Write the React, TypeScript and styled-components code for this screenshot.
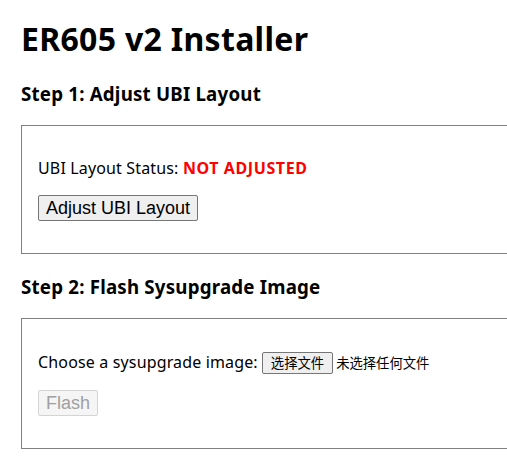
import styled, { createGlobalStyle } from 'styled-components';

const GlobalStyle = createGlobalStyle`
  html, body {
    margin: 0;
    overflow: hidden;
    background: #ffffff;
  }
  body {
    font-family: 'Noto Sans', 'Open Sans', sans-serif;
    color: #000000;
  }
`;

function App() {
  return (
    <>
      <GlobalStyle />
      <Page>
        <Title>ER605 v2 Installer</Title>

        <StepTitle>Step 1: Adjust UBI Layout</StepTitle>
        <Section>
          <Row>
            UBI Layout Status: <Status>NOT ADJUSTED</Status>
          </Row>
          <Row>
            <Button>Adjust UBI Layout</Button>
          </Row>
        </Section>

        <StepTitle>Step 2: Flash Sysupgrade Image</StepTitle>
        <Section>
          <FileRow>
            <span>Choose a sysupgrade image:</span>
            <FileButton>选择文件</FileButton>
            <FileName>未选择任何文件</FileName>
          </FileRow>
          <Row>
            <Button disabled>Flash</Button>
          </Row>
        </Section>
      </Page>
    </>
  );
}

export default App;

const Page = styled.div`
  padding: 0 21px;
  width: 640px;
`;

const Title = styled.h1`
  font-size: 32px;
  line-height: 42px;
  font-weight: 700;
  letter-spacing: 0.3px;
  margin: 18px 0 21px;
`;

const StepTitle = styled.h3`
  font-size: 18.72px;
  line-height: 25px;
  font-weight: 700;
  letter-spacing: 0.2px;
  margin: 20px 0 19px;
`;

const Section = styled.div`
  border: 1px solid #808080;
  padding: 16px;
`;

const Row = styled.p`
  font-size: 16px;
  line-height: 21px;
  letter-spacing: 0.15px;
  margin: 16px 0;
`;

const FileRow = styled(Row)`
  display: flex;
  align-items: center;
  height: 23px;
  gap: 4px;
`;

const Status = styled.span`
  color: #ff0000;
  font-weight: 700;
  letter-spacing: 0.6px;
`;

const Button = styled.button`
  font-family: 'Liberation Sans', Arial, sans-serif;
  font-size: 18px;
  line-height: 20px;
  letter-spacing: 0;
  padding: 2px 7px;
  color: #000000;
  background: #efefef;
  border: 1px solid #767676;
  border-radius: 2px;
  vertical-align: top;

  &:disabled {
    color: #a0a0a0;
    background: #f5f5f5;
    border-color: #d4d4d4;
  }
`;

const FileButton = styled.button`
  font-family: 'Noto Sans CJK SC', sans-serif;
  font-size: 13.33px;
  line-height: 18px;
  letter-spacing: 0;
  padding: 1px 8px;
  color: #000000;
  background: #efefef;
  border: 1px solid #767676;
  border-radius: 2px;
`;

const FileName = styled.span`
  font-family: 'Noto Sans CJK SC', sans-serif;
  font-size: 13.33px;
  letter-spacing: 0;
  margin-left: -1px;
`;
